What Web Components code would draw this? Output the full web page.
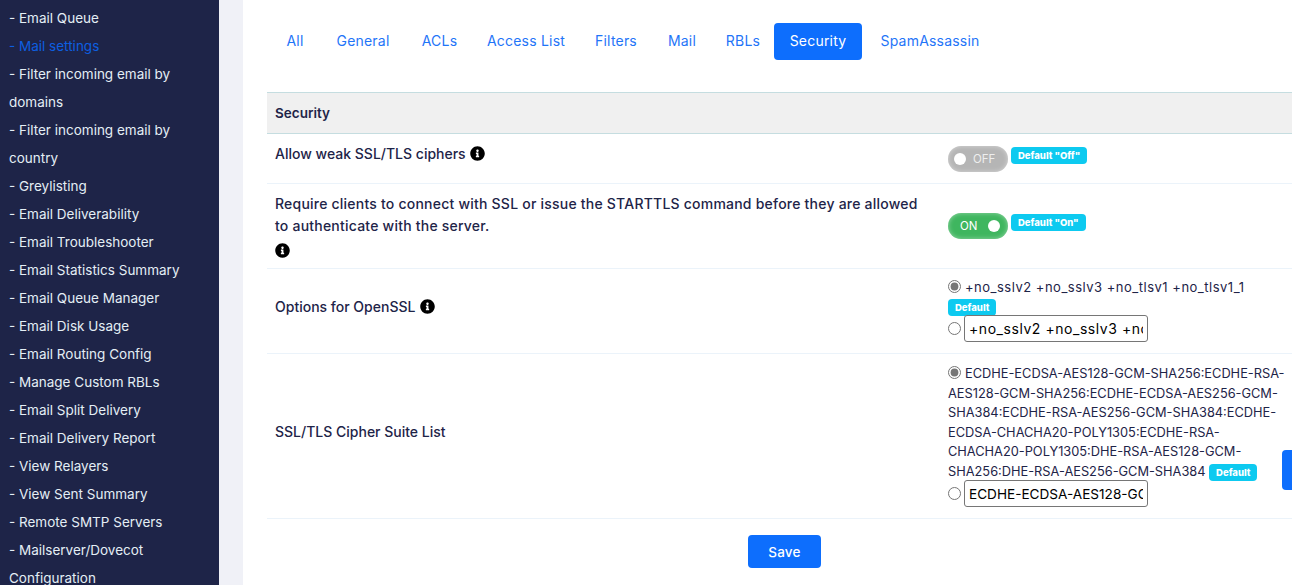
<!DOCTYPE html>
<html>
<head>
<meta charset="utf-8">
<title>Mail settings</title>
<style>
  html, body { margin: 0; height: 585px; overflow: hidden; }
  body { font-family: Inter, "Noto Sans", sans-serif; font-size: 14px; color: #1e2448; background: #f0f1f7; }
</style>
</head>
<body>
<app-shell>
  <side-nav slot="side">
    <nav-link>- Email Queue</nav-link>
    <nav-link active>- Mail settings</nav-link>
    <nav-link>- Filter incoming email by domains</nav-link>
    <nav-link>- Filter incoming email by country</nav-link>
    <nav-link>- Greylisting</nav-link>
    <nav-link>- Email Deliverability</nav-link>
    <nav-link>- Email Troubleshooter</nav-link>
    <nav-link>- Email Statistics Summary</nav-link>
    <nav-link>- Email Queue Manager</nav-link>
    <nav-link>- Email Disk Usage</nav-link>
    <nav-link>- Email Routing Config</nav-link>
    <nav-link>- Manage Custom RBLs</nav-link>
    <nav-link>- Email Split Delivery</nav-link>
    <nav-link>- Email Delivery Report</nav-link>
    <nav-link>- View Relayers</nav-link>
    <nav-link>- View Sent Summary</nav-link>
    <nav-link>- Remote SMTP Servers</nav-link>
    <nav-link>- Mailserver/Dovecot Configuration</nav-link>
  </side-nav>

  <tab-bar>
    <tab-item style="width:48px">All</tab-item>
    <tab-item style="width:88px">General</tab-item>
    <tab-item style="width:65px">ACLs</tab-item>
    <tab-item style="width:108px">Access List</tab-item>
    <tab-item style="width:72px">Filters</tab-item>
    <tab-item style="width:60px">Mail</tab-item>
    <tab-item style="width:62px">RBLs</tab-item>
    <tab-item style="width:88px" active>Security</tab-item>
    <tab-item style="width:134px;margin-left:1px">SpamAssassin</tab-item>
  </tab-bar>

  <settings-panel heading="Security">
    <setting-row>
      <span slot="label">Allow weak SSL/TLS ciphers <info-icon></info-icon></span>
      <toggle-switch></toggle-switch>
      <default-badge>Default "Off"</default-badge>
    </setting-row>
    <setting-row flush>
      <span slot="label" style="letter-spacing:.22px">Require clients to connect with SSL or issue the STARTTLS command before they are allowed<br>to authenticate with the server.<br><info-icon style="vertical-align:-5px;margin-left:0"></info-icon></span>
      <toggle-switch on></toggle-switch>
      <default-badge>Default "On"</default-badge>
    </setting-row>
    <setting-row>
      <span slot="label">Options for OpenSSL <info-icon></info-icon></span>
      <choice-field name="openssl" value="+no_sslv2 +no_sslv3 +no_tlsv1 +no_tlsv1_1" style="--fs:13px;--ls:.5px;--input-fs:14px;--input-ls:.55px;--gap:-2px;--badge-top:1px">+no_sslv2 +no_sslv3 +no_tlsv1 +no_tlsv1_1 <default-badge>Default</default-badge></choice-field>
    </setting-row>
    <setting-row style="min-height:165px">
      <span slot="label">SSL/TLS Cipher Suite List</span>
      <choice-field name="ciphers" value="ECDHE-ECDSA-AES128-GCM-SHA256:ECDHE-RSA-AES128-GCM-SHA256" style="--fs:12.8px;--ls:0;--input-fs:13.6px;--input-ls:0;--gap:-1px">ECDHE-ECDSA-AES128-GCM-SHA256:ECDHE-RSA-AES128-GCM-SHA256:ECDHE-ECDSA-AES256-GCM-SHA384:ECDHE-RSA-AES256-GCM-SHA384:ECDHE-ECDSA-CHACHA20-POLY1305:ECDHE-RSA-CHACHA20-POLY1305:DHE-RSA-AES128-GCM-SHA256:DHE-RSA-AES256-GCM-SHA384 <default-badge>Default</default-badge></choice-field>
    </setting-row>
  </settings-panel>
</app-shell>

<script>
function define(name, css, html) {
  customElements.define(name, class extends HTMLElement {
    constructor() {
      super();
      this.attachShadow({ mode: "open" });
    }
    connectedCallback() {
      this.shadowRoot.innerHTML = `<style>${css}</style>${typeof html === "function" ? html(this) : html}`;
    }
  });
}

define("app-shell", `
  :host { display: flex; height: 585px; overflow: hidden; position: relative; }
  .gutter { width: 24px; flex: none; }
  main { flex: 1; min-width: 0; background: #fff; padding: 23px 0 0 24px; box-sizing: border-box; overflow: hidden; }
  .save { display: flex; justify-content: center; width: 1035px; padding-top: 16px; }
  button { width: 73px; height: 33px; background: #0d6efd; color: #fff; border: 0; border-radius: 4px; font: 500 13.5px Inter, sans-serif; letter-spacing: .2px; }
  .float { position: absolute; left: 1282px; top: 450px; width: 30px; height: 40px; background: #0d6efd; border-radius: 4px; }
`, `
  <slot name="side"></slot>
  <div class="gutter"></div>
  <main>
    <slot></slot>
    <div class="save"><button>Save</button></div>
  </main>
  <div class="float"></div>
`);

define("side-nav", `
  :host { display: block; width: 219px; flex: none; height: 585px; overflow: hidden; box-sizing: border-box; background: #1e2448; padding: 4px 36px 0 9px; }
`, `<slot></slot>`);

define("nav-link", `
  :host { display: block; font-size: 13.5px; line-height: 28px; color: #e4eef5; }
  :host([active]) { color: #0d5fe0; }
`, `<slot></slot>`);

define("tab-bar", `
  :host { display: flex; height: 37px; margin-bottom: 32px; padding-left: 4px; }
`, `<slot></slot>`);

define("tab-item", `
  :host { display: block; flex: none; text-align: center; height: 37px; line-height: 36px; font-size: 14px; letter-spacing: .2px; color: #1f75f8; border-radius: 4px; }
  :host([active]) { background: #0d6efd; color: #fff; }
`, `<slot></slot>`);

define("settings-panel", `
  :host { display: block; width: 1035px; }
  header { height: 40px; line-height: 40px; padding-left: 8px; background: #f0f0f0; border-top: 1px solid #c5dde0; border-bottom: 1px solid #c5dde0; font-weight: 600; font-size: 13.5px; color: #1e2448; }
`, el => `<header>${el.getAttribute("heading")}</header><slot></slot>`);

define("setting-row", `
  :host { display: grid; grid-template-columns: 681px 1fr; box-sizing: border-box; min-height: 50px; border-bottom: 1px solid #ebf3fa; }
  .label { padding: 9px 8px; display: flex; align-items: center; font-size: 14px; font-weight: 500; line-height: 22px; color: #1e2448; }
  .label > div { margin-bottom: 9px; }
  :host([flush]) .label > div { margin-bottom: 0; }
  .value { padding: 9px 0; display: flex; align-items: flex-start; align-content: center; flex-wrap: wrap; }
`, `
  <div class="label"><div><slot name="label"></slot></div></div>
  <div class="value"><slot></slot></div>
`);

define("toggle-switch", `
  :host { display: inline-block; width: 60px; height: 26px; border-radius: 13px; position: relative; background: #b5b5b5; box-shadow: inset 0 0 5px rgba(255,255,255,.45); color: #eee; font-size: 11.5px; line-height: 26px; }
  :host([on]) { background: #3fb65f; color: #fff; }
  i { position: absolute; top: 7px; left: 6px; width: 12px; height: 12px; border-radius: 50%; background: #fff; }
  :host([on]) i { left: 40px; }
  span { position: absolute; left: 25px; }
  :host([on]) span { left: 12px; }
`, el => `<i></i><span>${el.hasAttribute("on") ? "ON" : "OFF"}</span>`);

define("default-badge", `
  :host { display: inline-block; background: #0dcaf0; color: #fff; font-weight: 800; font-size: 9.5px; letter-spacing: 0; line-height: 17px; padding: 0 7px; border-radius: 4px; margin: 1px 0 0 3px; }
  :host-context(choice-field) { margin: var(--badge-top, 2px) 0 0; vertical-align: top; }
`, `<slot></slot>`);

define("info-icon", `
  :host { display: inline-block; width: 15px; height: 15px; vertical-align: -2px; margin-left: 1px; }
  svg { display: block; }
`, `<svg width="15" height="15" viewBox="0 0 512 512"><path fill="#000" d="M256 8C119 8 8 119 8 256s111 248 248 248 248-111 248-248S393 8 256 8zm0 110c23 0 42 19 42 42s-19 42-42 42-42-19-42-42 19-42 42-42zm56 254c0 7-5 12-12 12h-88c-7 0-12-5-12-12v-24c0-7 5-12 12-12h12v-64h-12c-7 0-12-5-12-12v-24c0-7 5-12 12-12h64c7 0 12 5 12 12v100h12c7 0 12 5 12 12v24z"/></svg>`);

define("choice-field", `
  :host { display: block; width: 338px; font-size: var(--fs); letter-spacing: var(--ls); line-height: 19.6px; color: #1e2448; }
  input[type=radio] { width: 13px; height: 13px; margin: 0 4px 0 0; vertical-align: -1px; accent-color: #767676; }
  .other { display: flex; align-items: center; margin: var(--gap, 0px) 0 calc(-1 * var(--gap, 0px)); }
  .other input[type=radio] { margin-right: 3px; }
  input[type=text] { width: 184px; height: 27px; box-sizing: border-box; padding: 1px 4px; border: 1px solid #767676; border-radius: 3px; font: var(--input-fs) Inter, sans-serif; letter-spacing: var(--input-ls); color: #000; outline: 0; }
`, el => `
  <div><input type="radio" name="${el.getAttribute("name")}" checked><slot></slot></div>
  <div class="other"><input type="radio" name="${el.getAttribute("name")}"><input type="text" value="${el.getAttribute("value")}"></div>
`);
</script>
</body>
</html>
